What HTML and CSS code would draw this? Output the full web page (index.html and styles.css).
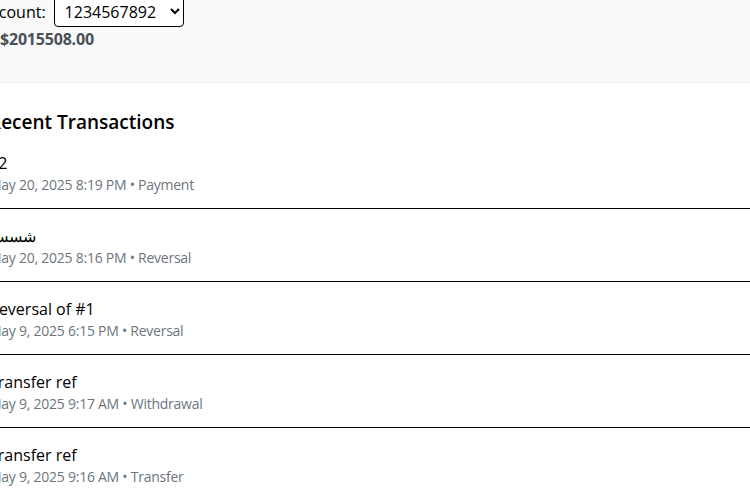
FILE: index.html
```html
<!DOCTYPE html>
<html lang="en">
<head>
  <meta charset="UTF-8">
  <meta name="viewport" content="width=device-width, initial-scale=1.0">
  <title>Transactions</title>
  <link rel="stylesheet" href="styles.css">
</head>
<body>
  <div class="page">
    <div class="summary">
      <div class="account-row">
        <label for="account">Account:</label>
        <select id="account">
          <option>1234567892</option>
          <option>1234567891</option>
        </select>
      </div>
      <div class="balance">$2015508.00</div>
    </div>

    <div class="recent">
      <h2>Recent Transactions</h2>
      <ul class="tx-list">
        <li>
          <div class="tx-title">12</div>
          <div class="tx-meta">May 20, 2025 8:19 PM • Payment</div>
        </li>
        <li>
          <div class="tx-title">شسس</div>
          <div class="tx-meta">May 20, 2025 8:16 PM • Reversal</div>
        </li>
        <li>
          <div class="tx-title">Reversal of #1</div>
          <div class="tx-meta">May 9, 2025 6:15 PM • Reversal</div>
        </li>
        <li>
          <div class="tx-title">Transfer ref</div>
          <div class="tx-meta">May 9, 2025 9:17 AM • Withdrawal</div>
        </li>
        <li>
          <div class="tx-title">Transfer ref</div>
          <div class="tx-meta">May 9, 2025 9:16 AM • Transfer</div>
        </li>
      </ul>
    </div>
  </div>
</body>
</html>
```

FILE: styles.css
```css
* {
  box-sizing: border-box;
}
body {
  margin: 0;
  font-family: "Open Sans", "Noto Sans", sans-serif;
  color: #000;
  background: #fff;
  overflow: hidden;
}
.page {
  margin-top: -4px;
}

/* account panel */
.summary {
  background-color: #f8f9fa;
  border-bottom: 1px solid #eef0f2;
  padding-bottom: 31px;
}
.account-row {
  display: flex;
  align-items: center;
  gap: 8px;
  margin-left: -19px;
  font-size: 16px;
}
.account-row select {
  width: 130px;
  height: 31px;
  font-family: inherit;
  font-size: 16px;
  padding: 0 6px;
  border: 1px solid #000;
  border-radius: 4px;
  background: #fff;
  color: #000;
}
.balance {
  font-size: 16px;
  line-height: 24px;
  font-weight: 700;
  letter-spacing: -0.2px;
  color: #495057;
}

/* list */
.recent {
  margin-left: -11px;
  padding-top: 25px;
}
.recent h2 {
  margin: 0;
  font-size: 19px;
  line-height: 28px;
  font-weight: 600;
}
.tx-list {
  list-style: none;
  margin: 0;
  padding: 0;
}
.tx-list li {
  padding: 15px 0 13px;
  border-bottom: 1px solid #000;
}
.tx-title {
  font-size: 16px;
  line-height: 24px;
  font-weight: 500;
}
.tx-meta {
  font-size: 14px;
  line-height: 20px;
  letter-spacing: -0.25px;
  color: #6c757d;
}
```
